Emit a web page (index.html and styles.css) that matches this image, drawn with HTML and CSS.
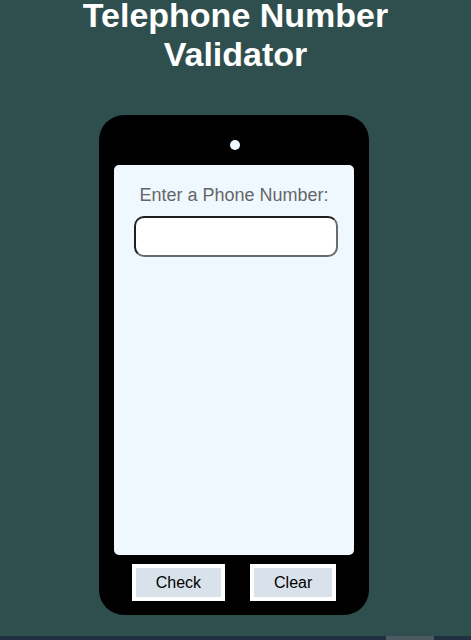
FILE: index.html
```html
<!DOCTYPE html>
<html lang="en">
<head>
<meta charset="utf-8">
<title>Telephone Number Validator</title>
<link rel="stylesheet" href="styles.css">
</head>
<body>
<h1 class="title"><span class="title-line">Telephone Number</span><span class="title-line second">Validator</span></h1>
<div class="phone">
  <div class="camera"></div>
  <div class="screen">
    <label class="label" for="user-input">Enter a Phone Number:</label>
    <input class="field" id="user-input" type="text">
  </div>
  <div class="buttons">
    <button class="btn">Check</button>
    <button class="btn">Clear</button>
  </div>
</div>
<div class="scrollbar"><div class="thumb"></div></div>
</body>
</html>
```
FILE: styles.css
```css
html, body {
  margin: 0;
  padding: 0;
}
body {
  background: #2f4f4f;
  font-family: "Liberation Sans", Arial, sans-serif;
  height: 640px;
  overflow: hidden;
}
.title {
  margin: 0;
  color: #fff;
  font-size: 34px;
  line-height: 31px;
  font-weight: bold;
  text-align: center;
}
.title-line {
  display: block;
}
.title-line.second {
  margin-top: 8px;
}
.phone {
  margin: 45px 0 0 99px;
  width: 270px;
  height: 500px;
  background: #000;
  border-radius: 25px;
  padding-top: 25px;
  box-sizing: border-box;
  display: flex;
  flex-direction: column;
  align-items: center;
}
.camera {
  width: 10px;
  height: 10px;
  border-radius: 50%;
  background: #f0f8ff;
  margin-left: 1px;
}
.screen {
  margin-top: 15px;
  width: 240px;
  height: 390px;
  background: #f0f8ff;
  border-radius: 5px;
  box-sizing: border-box;
  padding-top: 20px;
  display: flex;
  flex-direction: column;
}
.label {
  color: #666;
  font-size: 18px;
  text-align: center;
  line-height: 21px;
}
.field {
  margin: 10px 0 0 20px;
  width: 204px;
  height: 41px;
  box-sizing: border-box;
  border: 2px solid;
  border-color: #1f1f1f #6b6b6b #6b6b6b #1f1f1f;
  border-radius: 10px;
  background: #fff;
  font-size: 16px;
  padding: 0 8px;
  font-family: inherit;
}
.buttons {
  margin-top: 9px;
  display: flex;
  gap: 25px;
  justify-content: center;
}
.btn {
  height: 37px;
  box-sizing: border-box;
  border: 4px solid #fff;
  background: #d9e2ea;
  color: #000;
  font-family: "Liberation Sans", Arial, sans-serif;
  font-size: 16px;
  padding: 0 20px;
}
.scrollbar {
  position: fixed;
  left: 0;
  right: 0;
  bottom: 0;
  height: 4px;
  background: #1f3140;
}
.thumb {
  margin-left: 386px;
  width: 48px;
  height: 4px;
  background: #4d5961;
}
```
